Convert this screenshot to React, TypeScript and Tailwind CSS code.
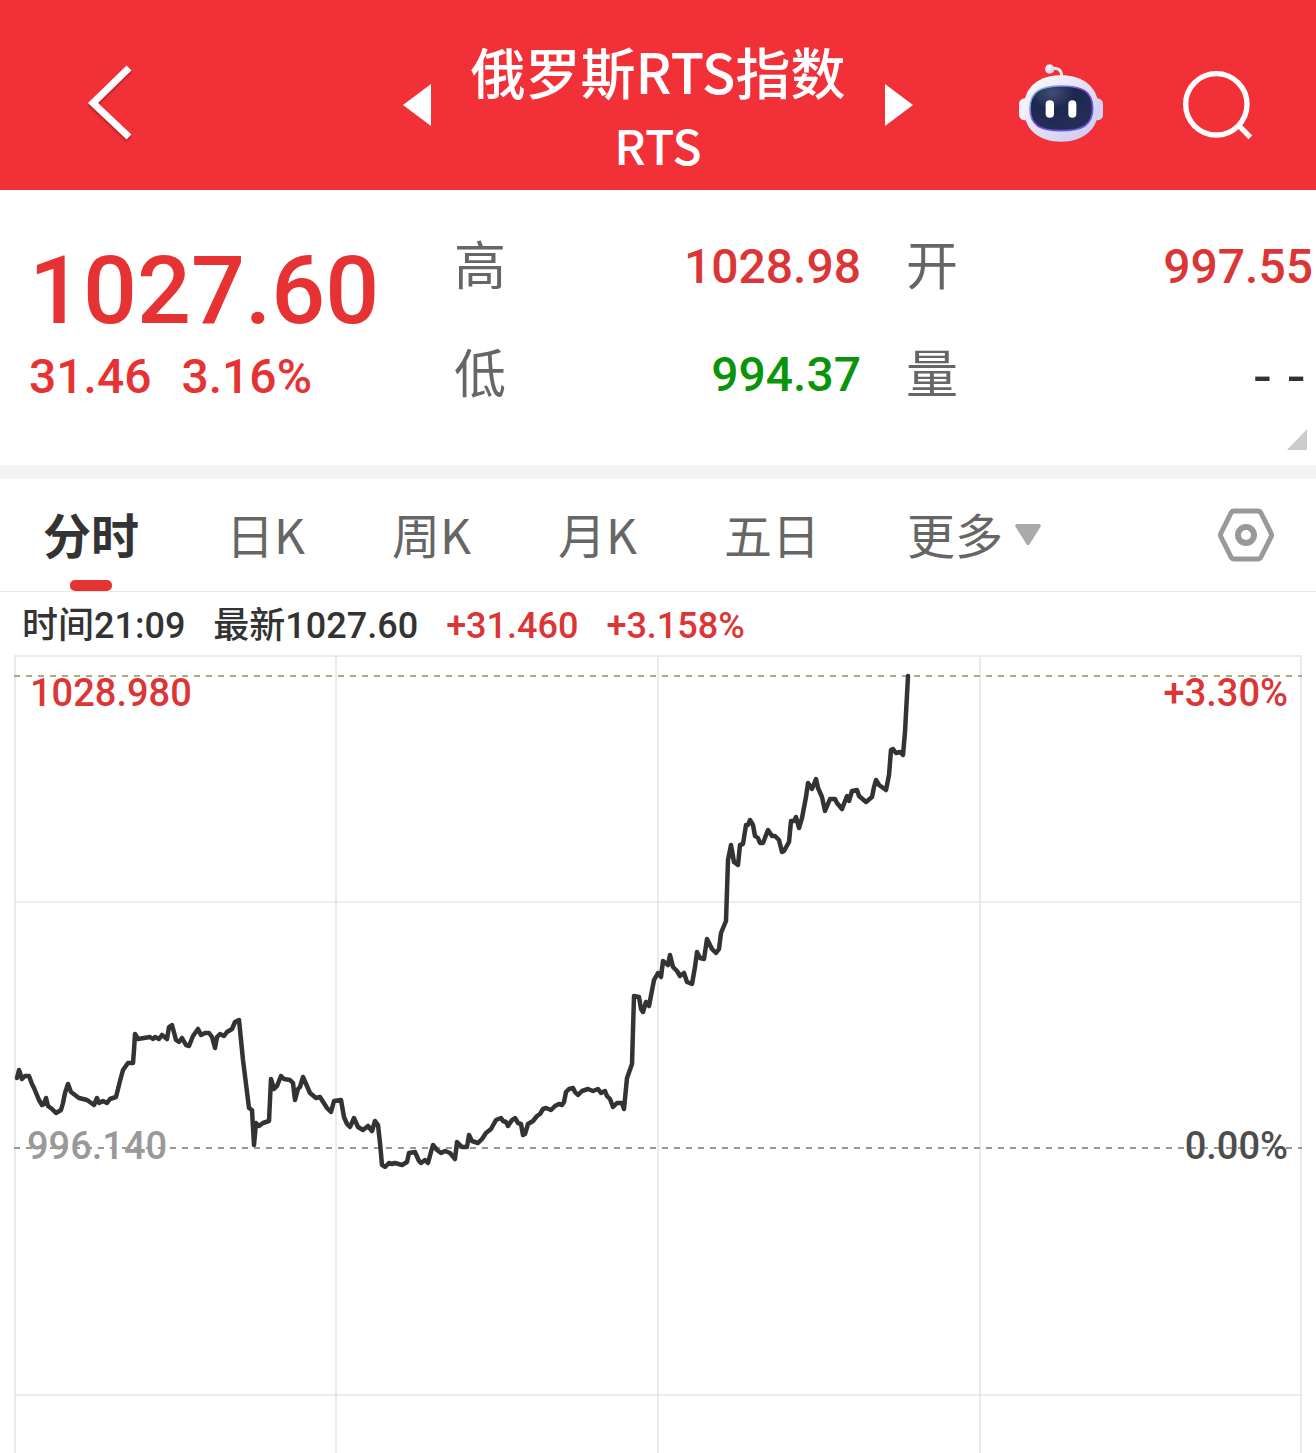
import React, { useState } from "react";

// Intraday price line, x/y in chart units
const PRICE_POINTS = `
17,423 19,415 22,424 25,421 29,421 32,429 34,433 39,445 42,450 44,449 46,443 48,451 52,454 56,458 61,455
63,448 65,438 68,429 71,437 79,443 87,445 94,450 97,443 99,448 103,446 107,448 110,444 116,442 120,426
123,415 128,408 133,408 134,395 135,379 138,384 144,383 150,382 153,384 155,382 159,384 162,380 167,384
169,372 172,370 176,385 179,387 182,383 186,390 189,391 193,381 198,374 201,380 205,378 209,378 212,382
215,393 217,382 220,379 224,381 227,377 232,374 235,367 239,365 243,405 249,453 252,455 254,490 256,468
259,471 263,468 269,466 271,424 274,434 277,431 281,421 284,424 290,425 293,428 295,445 298,434 300,432
303,422 310,438 316,443 320,442 327,453 331,457 334,446 341,445 344,462 347,469 350,472 354,463 358,472
363,475 368,471 372,476 375,466 378,470 380,488 382,510 385,512 389,508 392,509 395,508 402,510 407,507
409,498 415,497 419,506 421,508 425,505 428,508 431,497 433,490 437,495 441,498 445,496 450,498 455,504
457,487 462,492 467,492 469,480 472,486 478,488 482,484 486,478 491,474 496,465 501,463 503,466 506,467
508,471 512,465 515,463 518,468 521,469 523,480 525,479 528,469 533,466 537,461 540,459 543,454 546,453
551,455 555,451 559,449 562,450 564,447 566,437 569,434 573,433 575,437 578,440 582,436 588,434 593,436
598,434 601,438 605,436 607,441 610,444 613,452 617,448 622,448 624,454 627,423 632,409 634,341 639,342
641,354 643,357 646,347 649,351 654,325 658,318 661,322 663,306 668,310 670,300 673,312 677,316 680,321
684,318 687,327 692,329 695,312 697,297 700,303 704,304 707,284 712,294 716,298 719,294 721,278 726,266
728,205 731,190 734,207 738,210 740,190 743,189 746,170 748,170 750,165 753,170 755,181 758,183 760,188
763,188 768,175 772,181 775,181 779,185 782,197 784,196 789,187 791,166 794,166 796,162 799,173 802,163
806,142 808,128 812,134 816,124 818,133 822,142 825,156 830,144 835,144 837,148 842,154 847,141 849,146
852,136 857,135 859,141 866,147 872,142 874,132 876,125 879,130 886,135 889,120 891,95 893,94 896,98
900,97 903,100 905,77 908,21`;

const TABS = ["分时", "日K", "周K", "月K", "五日"];

const STATS = [
    { label: "高", value: "1028.98", className: "text-[48px] text-[#dc3535]" },
    { label: "开", value: "997.55", className: "text-[48px] text-[#dc3535]" },
    { label: "低", value: "994.37", className: "text-[48px] text-[#0a940a]" },
    { label: "量", value: "--", className: "text-[56px] text-[#333] font-['DejaVu_Sans_Mono',monospace]" },
];

function RobotIcon() {
    return (
        <svg viewBox="474 98 258 240" className="w-[86px] h-20" aria-hidden="true">
            <defs>
                <linearGradient id="shell" x1="0" y1="0" x2="1" y2="1">
                    <stop offset="0" stopColor="#ffffff" />
                    <stop offset="0.5" stopColor="#e3e0f6" />
                    <stop offset="1" stopColor="#c9c6ee" />
                </linearGradient>
                <linearGradient id="rim" x1="0" y1="0" x2="1" y2="1">
                    <stop offset="0" stopColor="#7fd6e8" />
                    <stop offset="0.5" stopColor="#7a3fd8" />
                    <stop offset="1" stopColor="#5b62e6" />
                </linearGradient>
                <radialGradient id="visor" cx="0.35" cy="0.15" r="0.9">
                    <stop offset="0" stopColor="#454d74" />
                    <stop offset="0.4" stopColor="#1d2850" />
                    <stop offset="1" stopColor="#252e57" />
                </radialGradient>
            </defs>
            <path d="M570 115 Q606 108 605 140" fill="none" stroke="#eceaf8" strokeWidth="9" />
            <circle cx="569" cy="116" r="14" fill="#dedbf3" />
            <circle cx="566" cy="112" r="8" fill="#f4f2fc" />
            <rect x="477" y="204" width="40" height="66" rx="17" fill="#f3f1fc" />
            <rect x="690" y="204" width="39" height="66" rx="17" fill="#d3d1f4" />
            <path
                d="M603 135 C665 135 714 166 716 232 C716 298 668 334 603 334 C538 334 491 298 491 232 C493 166 541 135 603 135Z"
                fill="url(#shell)"
            />
            <path
                d="M604 167 C664 167 698 182 698 234 C698 286 666 301 604 301 C542 301 510 286 510 234 C510 182 544 167 604 167Z"
                fill="url(#visor)"
                stroke="url(#rim)"
                strokeWidth="5"
            />
            <rect x="557" y="210" width="25" height="52" rx="12" fill="#fff" />
            <rect x="625" y="210" width="24" height="52" rx="12" fill="#fff" />
        </svg>
    );
}

function Header() {
    return (
        <header className="grid grid-cols-[1fr_auto_1fr] items-center bg-[#f13038] pt-[33px] pb-[9px] text-white">
            <div className="pb-2 pl-[86px]">
                <button aria-label="返回" className="block">
                    <svg viewBox="0 0 48 80" className="h-20 w-12 drop-shadow-[0_2px_1px_rgba(80,0,0,0.4)]">
                        <path d="M43 5 L7 40 L43 74" fill="none" stroke="#fff" strokeWidth="7" />
                    </svg>
                </button>
            </div>
            <div className="flex items-center gap-[39px]">
                <button aria-label="上一个" className="pb-1">
                    <svg viewBox="0 0 28 42" className="h-[42px] w-7">
                        <path d="M28 0 V42 L0 21Z" fill="#fff" />
                    </svg>
                </button>
                <h1 className="text-center font-medium">
                    <span className="block text-[55px] leading-[74px]">俄罗斯RTS指数</span>
                    <span className="block text-[48px] leading-[74px]">RTS</span>
                </h1>
                <button aria-label="下一个" className="pb-1">
                    <svg viewBox="0 0 28 42" className="h-[42px] w-7">
                        <path d="M0 0 V42 L28 21Z" fill="#fff" />
                    </svg>
                </button>
            </div>
            <div className="flex items-center justify-end gap-[78px] pr-[63px] pb-1">
                <button aria-label="智能助手" className="pb-1">
                    <RobotIcon />
                </button>
                <button aria-label="搜索">
                    <svg viewBox="966 120 213 210" className="h-[70px] w-[71px]">
                        <circle cx="1069" cy="223" r="92" fill="none" stroke="#fff" strokeWidth="16" />
                        <path d="M1136 286 L1171 322" stroke="#fff" strokeWidth="16" />
                    </svg>
                </button>
            </div>
        </header>
    );
}

function Quote() {
    return (
        <section className="relative flex border-b-[14px] border-[#f4f4f4] pt-[23px] pb-9 font-['Roboto','Noto_Sans_CJK_SC',sans-serif] font-medium">
            <div className="w-[34.5%] pt-6 pl-[29px] text-[#e63232]">
                <div className="text-[95px] leading-[108px]">1027.60</div>
                <div className="flex gap-[30px] text-[48px] leading-[64px]">
                    <span>31.46</span>
                    <span>3.16%</span>
                </div>
            </div>
            <dl className="grid flex-1 grid-cols-2 gap-x-[45px] pr-[3px]">
                {STATS.map((s) => (
                    <div key={s.label} className="flex h-[108px] items-center justify-between">
                        <dt className="pb-2 font-['Noto_Sans_CJK_SC',sans-serif] text-[52px] leading-[64px] font-normal text-[#666]">
                            {s.label}
                        </dt>
                        <dd className={`leading-[64px] ${s.className}`}>{s.value}</dd>
                    </div>
                ))}
            </dl>
            <svg viewBox="0 0 20 21" className="absolute right-[9px] bottom-[15px] h-[21px] w-5">
                <path d="M20 0 V21 H0Z" fill="#ccc" />
            </svg>
        </section>
    );
}

function Tabs() {
    const [active, setActive] = useState("分时");

    return (
        <nav className="flex h-[113px] items-center border-b border-[#e6e6e6] pr-[42px] pl-[43px] text-[48px] text-[#666]">
            <div className="flex h-full gap-[87px]">
                {TABS.map((tab) => (
                    <button
                        key={tab}
                        onClick={() => setActive(tab)}
                        className={tab === active ? "relative pb-1 font-bold text-[#333]" : "relative pb-1"}
                    >
                        {tab}
                        {tab === active && (
                            <span className="absolute bottom-0 left-1/2 h-[11px] w-[42px] -translate-x-1/2 rounded-[5px] bg-[#e63232]" />
                        )}
                    </button>
                ))}
                <button className="flex items-center gap-3 pb-1">
                    更多
                    <svg viewBox="0 0 26 26" className="h-[26px] w-[26px]">
                        <path d="M1 4 H25 L26 6 L14 25 H12 L0 6Z" fill="#aaa" />
                    </svg>
                </button>
            </div>
            <button aria-label="设置" className="ml-auto">
                <svg viewBox="0 0 56 54" className="h-[54px] w-14" fill="none" stroke="#999">
                    <path
                        d="M16 3 H40 Q42 3 43 5 L53 25 Q54 27 53 29 L43 49 Q42 51 40 51 H16 Q14 51 13 49 L3 29 Q2 27 3 25 L13 5 Q14 3 16 3Z"
                        strokeWidth="5"
                    />
                    <circle cx="28" cy="27" r="8" strokeWidth="6" />
                </svg>
            </button>
        </nav>
    );
}

function Chart() {
    return (
        <svg
            viewBox="0 0 1316 798"
            role="img"
            aria-label="分时走势"
            className="block w-full font-['Roboto',sans-serif] text-[38px] font-medium"
        >
            <g stroke="#ebebeb" strokeWidth="2">
                <path d="M14 1 H1302" />
                <path d="M15 1 V798 M336 1 V798 M658 1 V798 M980 1 V798 M1301 1 V798" />
                <path d="M15 247 H1301 M15 740 H1301" strokeWidth="1" stroke="#dcdcdc" />
            </g>
            <path d="M14 21 H1302" stroke="#b5a77f" strokeWidth="2" strokeDasharray="6 6" />
            <path d="M14 493 H1302" stroke="#999" strokeWidth="2" strokeDasharray="6 6" />
            <polyline
                points={PRICE_POINTS}
                fill="none"
                stroke="#333"
                strokeWidth="4.5"
                strokeLinejoin="round"
                strokeLinecap="round"
            />
            <text x="30" y="51" fill="#dc3535">1028.980</text>
            <text x="1288" y="51" textAnchor="end" fill="#dc3535">+3.30%</text>
            <text x="27" y="504" fill="#999">996.140</text>
            <text x="1288" y="504" textAnchor="end" fill="#4d4d4d">0.00%</text>
        </svg>
    );
}

export default function App() {
    return (
        <main className="bg-white font-['Noto_Sans_CJK_SC',sans-serif]">
            <Header />
            <Quote />
            <Tabs />
            <div className="flex gap-7 px-[22px] pt-1.5 font-['Roboto','Noto_Sans_CJK_SC',sans-serif] text-[36px] leading-[57px] font-medium text-[#333]">
                <span>时间21:09</span>
                <span>最新1027.60</span>
                <span className="text-[#dc3535]">+31.460</span>
                <span className="text-[#dc3535]">+3.158%</span>
            </div>
            <Chart />
        </main>
    );
}
